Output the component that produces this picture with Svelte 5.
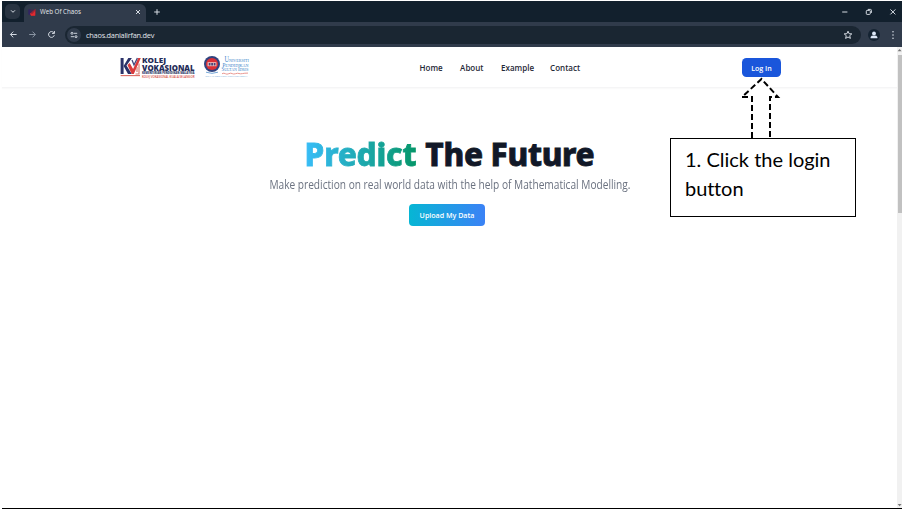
<script>
  const links = ['Home', 'About', 'Example', 'Contact'];
</script>

<main class="frame">
  <div class="browser">
    <div class="tabs">
      <div class="chevron">
        <svg width="6" height="5" viewBox="0 0 6 5"><path d="M1 1.3 3 3.3 5 1.3" /></svg>
      </div>
      <div class="tab">
        <svg class="favicon" width="9" height="9" viewBox="0 0 9 9">
          <path d="M.3 1.3h2.4v5.4H.3z" fill="#322464" />
          <path d="M2.5 1.5h3v4h-3z" fill="#46294c" />
          <path d="M2 5.5 7.6.7v6.8H3Z" fill="#a12334" />
          <path d="m2 5.2 2.2.8L7 3v4.7H3Z" fill="#e12a2f" />
        </svg>
        <span class="tab-title">Web Of Chaos</span>
        <svg class="close" width="6" height="6" viewBox="0 0 6 6"><path d="m1 1 4 4m0-4L1 5" /></svg>
      </div>
      <svg class="plus" width="8" height="8" viewBox="0 0 8 8"><path d="M4 1.2v5.6M1.2 4h5.6" /></svg>
      <div class="window-buttons">
        <svg width="8" height="8" viewBox="0 0 8 8"><path d="M1.2 4h5.2" /></svg>
        <svg width="8" height="8" viewBox="0 0 8 8">
          <rect x="1.3" y="2.4" width="4" height="4" rx=".8" />
          <path d="M2.8 1.4h2.7q.9 0 .9.9v2.6" />
        </svg>
        <svg width="8" height="8" viewBox="0 0 8 8"><path d="m1.4 1.4 5 5m0-5-5 5" /></svg>
      </div>
    </div>
    <div class="toolbar">
      <svg class="nav-icon" width="9" height="9" viewBox="0 0 9 9"><path d="M7.6 4.5H1.5M4.3 1.6 1.4 4.5l2.9 2.9" /></svg>
      <svg class="nav-icon dim" width="9" height="9" viewBox="0 0 9 9"><path d="M1.2 4.5h6.1M4.5 1.6l2.9 2.9-2.9 2.9" /></svg>
      <svg class="nav-icon" width="9" height="9" viewBox="0 0 9 9"><path d="M7.3 5.2A2.9 2.9 0 1 1 6.6 2.5l.7.7M7.4 1v2.4H5" /></svg>
      <div class="address">
        <div class="site-info">
          <svg width="8" height="8" viewBox="0 0 8 8">
            <circle cx="2" cy="2.3" r="1" /><path d="M3.8 2.3h3.4" />
            <circle cx="6" cy="5.7" r="1" /><path d="M.8 5.7h3.4" />
          </svg>
        </div>
        <span class="url">chaos.danialirfan.dev</span>
        <svg class="star" width="10" height="10" viewBox="0 0 10 10"><path d="m5 1.2 1.1 2.5 2.7.2-2.1 1.8.7 2.7L5 7 2.6 8.4l.7-2.7-2.1-1.8 2.7-.2Z" /></svg>
      </div>
      <div class="profile">
        <svg width="8" height="8" viewBox="0 0 8 8"><circle cx="4" cy="2.4" r="1.9" /><path d="M.6 7.2V6Q1 4.6 4 4.6T7.4 6v1.2Z" /></svg>
      </div>
      <svg class="menu" width="4" height="10" viewBox="0 0 4 10"><circle cx="2" cy="1.8" r=".8" /><circle cx="2" cy="5" r=".8" /><circle cx="2" cy="8.2" r=".8" /></svg>
    </div>
  </div>

  <div class="viewport">
    <div class="page">
      <header>
        <div class="logos">
          <svg class="kolej" width="76" height="22" viewBox="0 0 76 22">
            <path d="M.6 1h3v16h-3z" fill="#2b3269" />
            <path d="M8.3 1h3.6L6.5 8.5 11.8 17H8L3.6 9Z" fill="#2b3269" />
            <path d="m7.5 8 2.2-2 3.4 6L18.2 1h2.6L13.8 17h-2.1Z" fill="#d83b3c" />
            <path d="m12 3 2 5 3.4-7" fill="none" stroke="#3f477d" stroke-width="1.3" />
            <path d="M19 6.5V17h-3.5M17 10v5" fill="none" stroke="#d97c72" stroke-width="1.2" />
            <path d="M.6 18.6H20" stroke="#db6960" stroke-width="1.1" />
            <g font-family="Open Sans, sans-serif" font-weight="800">
              <text x="22" y="6.2" font-size="6.8" textLength="24" lengthAdjust="spacingAndGlyphs" fill="#252c59">KOLEJ</text>
              <text x="22" y="13.7" font-size="7.8" textLength="52.5" lengthAdjust="spacingAndGlyphs" fill="#252c59">VOKASIONAL</text>
              <text x="22" y="17.1" font-size="2.6" textLength="52.5" lengthAdjust="spacingAndGlyphs" fill="#343a68">KEMENTERIAN PENDIDIKAN MALAYSIA</text>
              <text x="22" y="21" font-size="2.9" font-weight="600" textLength="52.5" lengthAdjust="spacingAndGlyphs" fill="#d5493c">KOLEJ VOKASIONAL KUALA SELANGOR</text>
            </g>
          </svg>
          <svg class="upsi" width="46" height="24" viewBox="0 0 46 24">
            <circle cx="8" cy="8" r="8" fill="#30437f" />
            <circle cx="8" cy="8" r="6" fill="#da3037" />
            <path d="M3.6 6.2h8.8v4H3.6z" fill="#efc6c3" />
            <path d="M4.7 6.9h1.8v2.6H4.7zm2.5 0H9v2.6H7.2zm2.5 0h1.8v2.6H9.7z" fill="#4a4378" />
            <path d="M2 16.2q6 2.3 12 0" fill="none" stroke="#77a8d8" />
            <g font-family="Liberation Serif, serif" fill="#3984c9">
              <text x="20.5" y="6.3" font-size="5" textLength="24.5" lengthAdjust="spacingAndGlyphs"><tspan font-size="7.5">U</tspan>NIVERSITI</text>
              <text x="18.5" y="10.8" font-size="4.8" textLength="26" lengthAdjust="spacingAndGlyphs"><tspan font-size="6">P</tspan>ENDIDIKAN</text>
              <text x="17.5" y="15.3" font-size="4.8" textLength="27" lengthAdjust="spacingAndGlyphs"><tspan font-size="6">S</tspan>ULTAN <tspan font-size="6">I</tspan>DRIS</text>
              <text x="1.5" y="21" font-size="2.6" textLength="42" lengthAdjust="spacingAndGlyphs">SULTAN IDRIS EDUCATION UNIVERSITY</text>
            </g>
            <path d="M18 17.7q2-1 3.4 0t3.4 0 3.4-.1 3.4.1 3.4-.2 3.4.1 5.6-.5" fill="none" stroke="#ea9892" stroke-width="1" />
          </svg>
        </div>
        <nav>
          {#each links as link}
            <a href="#{link.toLowerCase()}" class={link.toLowerCase()}>{link}</a>
          {/each}
        </nav>
        <button class="login">Log In</button>
      </header>
      <section class="hero">
        <h1><span class="accent">Predict</span> <span class="rest">The Future</span></h1>
        <p><span>Make prediction on real world data with the help of Mathematical Modelling.</span></p>
        <button class="upload">Upload My Data</button>
      </section>
    </div>
    <div class="scrollbar">
      <svg width="5" height="6" viewBox="0 0 5 6"><path d="M.6 4.2 2.6 2l2 2.2Z" /></svg>
      <div class="thumb"></div>
      <svg class="down" width="5" height="6" viewBox="0 0 5 6"><path d="M.6 2h4l-2 2.2Z" /></svg>
    </div>
  </div>

  <div class="callout">
    <svg width="40" height="62" viewBox="0 0 40 62">
      <path d="M12 61V20H2L21.5 2 38 20h-8v41" />
    </svg>
    <div class="note">1. Click the login<br />bu<span class="joined">t</span>ton</div>
  </div>
</main>

<style>
  :global(body) { margin: 0; background: #fff; }
  .frame {
    box-sizing: border-box; position: relative; width: 902px; height: 509px;
    padding: 1px 0 0 2px; overflow: hidden; display: flex; flex-direction: column;
    background: #fff;
    font-family: "Open Sans", sans-serif;
  }
  svg { display: block; flex: none; overflow: visible; }
  button { border: 0; padding: 0; font-family: inherit; color: #fff; white-space: nowrap; }
  .browser { flex: none; height: 46px; background: #303b4b; }
  .tabs { display: flex; height: 21px; background: #12202d; }
  .tabs svg, .nav-icon, .star { fill: none; stroke: #d5dbe3; stroke-width: 1; }
  .chevron {
    width: 15px; height: 15px; margin: 3px 0 0 3px; border-radius: 5px;
    background: #293442; display: flex; align-items: center; justify-content: center;
  }
  .tab {
    width: 122px; height: 18px; margin: 3px 0 0 4px; border-radius: 6px 6px 0 0;
    background: #303b4b; display: flex; align-items: flex-start;
  }
  .tabs .favicon { margin: 4px 0 0 4px; stroke: none; }
  .tab-title { margin: 3px 0 0 3px; width: 93px; color: #e5e8ed; font-size: 6.2px; line-height: 10px; white-space: nowrap; }
  .close { margin: 5px 0 0 2px; }
  .tabs .plus { margin: 7px 0 0 7px; }
  .window-buttons { display: flex; gap: 16px; margin: 7px 5px 0 auto; }
  .toolbar { display: flex; align-items: center; height: 25px; padding-left: 7px; }
  .nav-icon { margin-right: 10px; }
  .nav-icon.dim { stroke: #8994a2; }
  .address { display: flex; align-items: center; width: 796px; height: 18px; margin-left: -1px; border-radius: 9px; background: #1a2632; }
  .site-info { width: 14px; height: 14px; margin-left: 2px; border-radius: 50%; background: #303b4b; display: flex; align-items: center; justify-content: center; }
  .site-info svg { fill: none; stroke: #dce2ea; stroke-width: .9; }
  .url { margin-left: 5px; font-size: 7.4px; letter-spacing: -.25px; color: #e0e5eb; line-height: 12px; }
  .star { margin: 0 8px 0 auto; }
  .profile { width: 12px; height: 12px; margin-left: 7px; border-radius: 50%; background: #142332; display: flex; align-items: center; justify-content: center; }
  .profile svg { fill: #dbe7f7; }
  .menu { margin-left: 11px; fill: #d0d7e0; }

  .viewport { flex: 1; display: flex; min-height: 0; border-bottom: 1px solid #000; }
  .page { flex: 1; }
  header { display: flex; height: 40px; border-bottom: 1px solid #f5f5f6; box-shadow: 0 1px 1px #fafafa; }
  .logos { display: flex; width: 417.6px; padding-left: 118px; box-sizing: border-box; }
  .kolej { margin-top: 10px; }
  .upsi { margin: 9px 0 0 8px; }
  nav { display: flex; width: 322.4px; padding-top: 15px; }
  nav a { flex: none; color: #1f2937; text-decoration: none; font-size: 8px; font-weight: 600; line-height: 12px; white-space: nowrap; }
  .home { width: 40.5px; }
  .about { width: 41px; }
  .example { width: 49px; }
  .login { width: 39px; height: 19px; margin-top: 11px; border-radius: 4.5px; background: #1a56db; font-size: 7.1px; font-weight: 600; }

  .hero { display: flex; flex-direction: column; align-items: center; padding-top: 45px; }
  h1 { margin: 0; font: 800 31.5px/42px "Noto Sans", sans-serif; letter-spacing: -.2px; color: #111827; white-space: nowrap; -webkit-text-stroke: .8px; }
  .accent { background: linear-gradient(90deg, #38bdf8, #059669); background-clip: text; -webkit-background-clip: text; color: transparent; }
  .rest { margin-left: 1px; letter-spacing: -.3px; }
  p { margin: 0; color: #6b7280; font-size: 11.8px; line-height: 18px; white-space: nowrap; }
  p span { display: block; transform: scaleX(.86); }
  .upload { width: 76px; height: 22px; margin: 11px 5px 0 0; border-radius: 4px; background: linear-gradient(90deg, #06b6d4, #3b82f6); font-size: 7.1px; font-weight: 600; }

  .scrollbar { display: flex; flex-direction: column; width: 5px; background: #f1f1f1; fill: #777; }
  .scrollbar .thumb { height: 158px; margin: 2px 0 0 1px; background: #c1c1c1; }
  .scrollbar .down { margin-top: auto; }

  .callout { position: absolute; left: 670px; top: 77px; width: 186px; }
  .callout svg { margin-left: 70px; fill: #fff; stroke: #000; stroke-width: 2; stroke-dasharray: 6 3; }
  .note {
    box-sizing: border-box; height: 79px; margin-top: -1px; padding: 6px 14px; position: relative;
    border: 1px solid #000; background: #fff; color: #000;
    font: 20px/29px Lato, sans-serif; white-space: nowrap;
  }
  .joined { letter-spacing: -.6px; }
</style>
